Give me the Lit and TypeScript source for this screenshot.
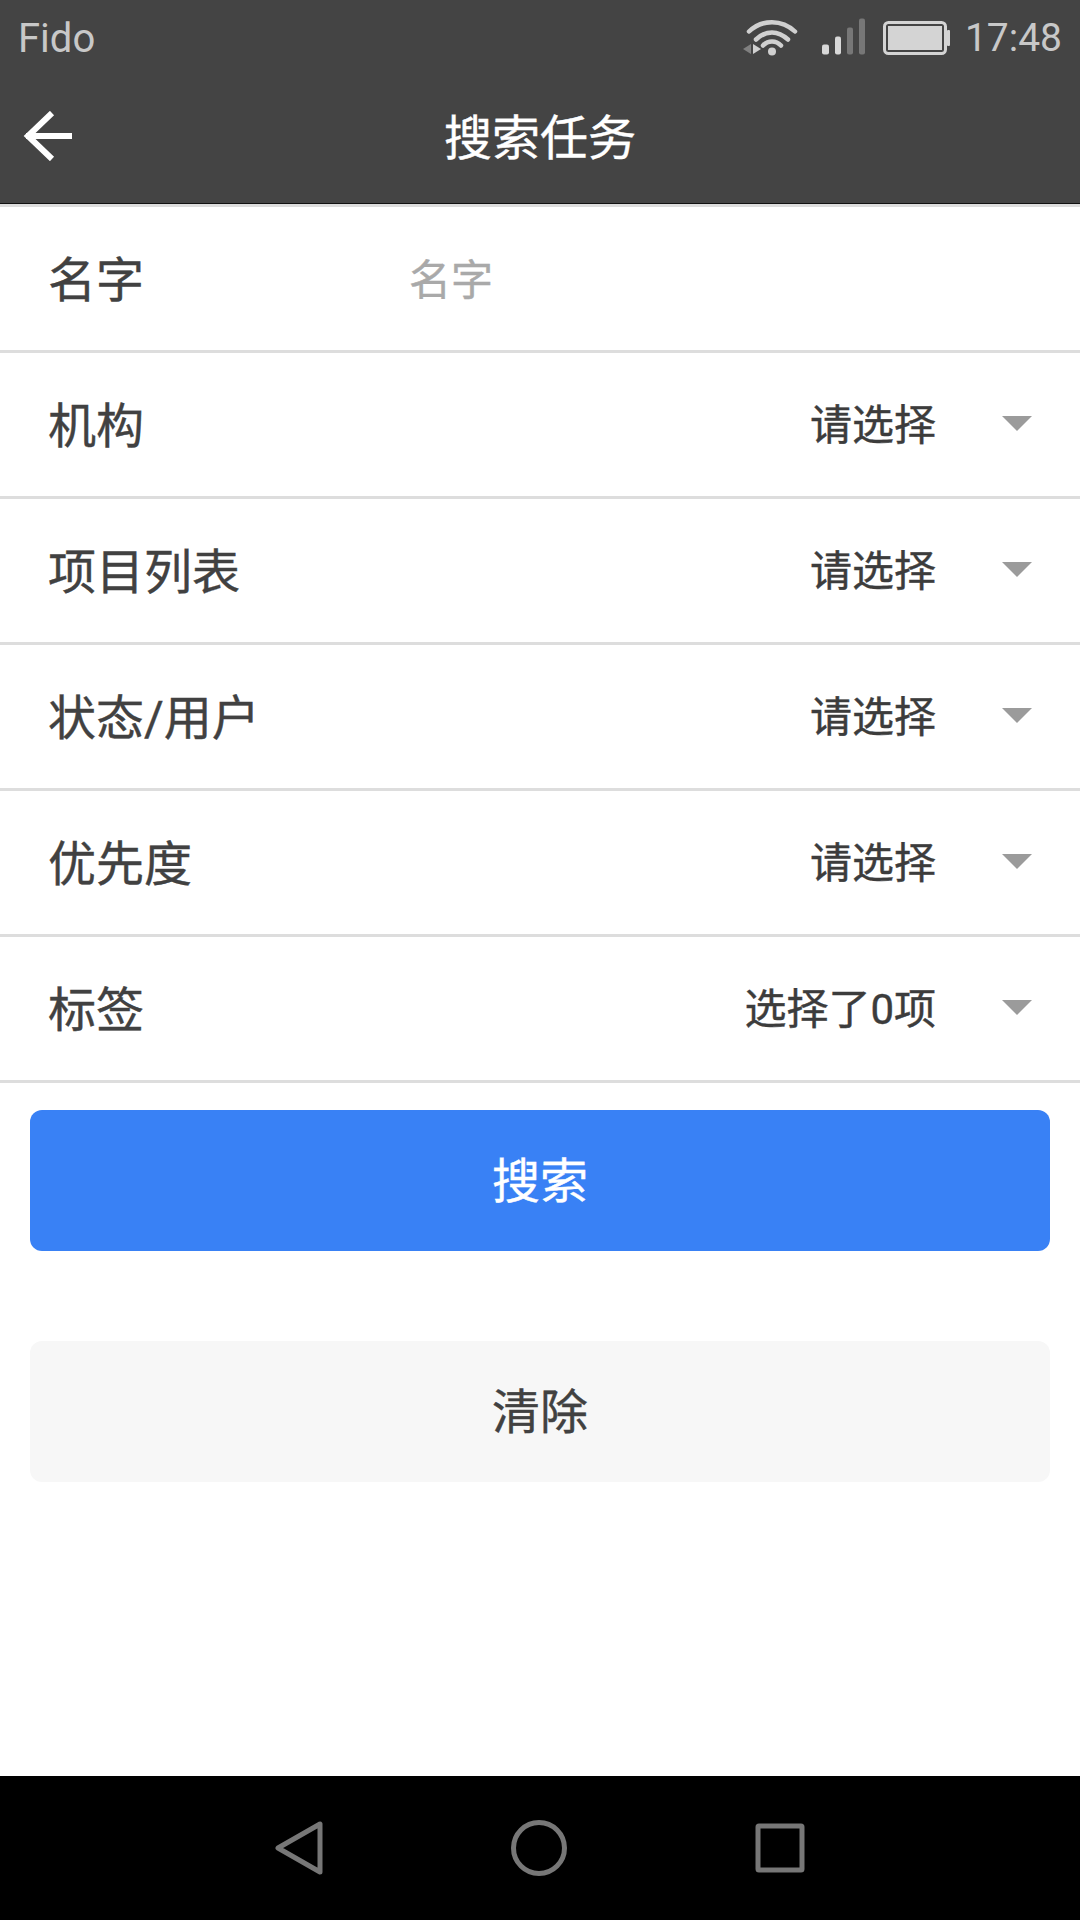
import { LitElement, html, css } from 'lit';
import { customElement } from 'lit/decorators.js';

const ROWS = [
    { label: '机构', value: '请选择' },
    { label: '项目列表', value: '请选择' },
    { label: '状态/用户', value: '请选择' },
    { label: '优先度', value: '请选择' },
    { label: '标签', value: '选择了0项' },
];

@customElement('app-root')
export class AppRoot extends LitElement {
    static styles = css`
        :host {
            display: flex;
            flex-direction: column;
            width: 1080px;
            height: 1920px;
            background: #fff;
            font-family: 'Roboto', 'Noto Sans CJK SC', sans-serif;
            color: #414141;
        }
        .status {
            height: 75px;
            background: #444;
            display: flex;
            align-items: center;
            color: #c8c8c8;
            font-size: 39px;
            padding: 0 18px;
            box-sizing: border-box;
        }
        .carrier {
            flex: 1;
            font-size: 40px;
            margin-top: 2px;
        }
        .time {
            margin-top: 1px;
        }
        .wifi {
            width: 56px;
            height: 40px;
            margin-right: 22px;
        }
        .signal {
            width: 44px;
            height: 40px;
            margin-right: 18px;
        }
        .battery {
            width: 68px;
            height: 34px;
            margin-right: 14px;
        }
        .toolbar {
            height: 129px;
            background: #444;
            border-bottom: 1px solid #111;
            box-sizing: border-box;
            padding-bottom: 10px;
            display: grid;
            grid-template-columns: 1fr auto 1fr;
            align-items: center;
            color: #fff;
            font-size: 48px;
            -webkit-text-stroke: 0.4px #fff;
        }
        .back {
            width: 50px;
            height: 50px;
            margin: 4px 0 0 23px;
            display: block;
        }
        .list {
            border-top: 3px solid #ddd;
        }
        .row {
            box-sizing: border-box;
            height: 146px;
            border-bottom: 3px solid #ddd;
            display: flex;
            align-items: center;
            padding: 0 48px 5px;
            font-size: 48px;
            -webkit-text-stroke: 0.4px #414141;
        }
        .name {
            width: 361px;
            flex: none;
        }
        .placeholder {
            font-size: 42px;
            color: #a9a9a9;
            -webkit-text-stroke: 0.4px #a9a9a9;
        }
        .value {
            margin-left: auto;
            margin-bottom: 2px;
            font-size: 42px;
            color: #3c3c3c;
            -webkit-text-stroke: 0.4px #3c3c3c;
        }
        .arrow {
            width: 30px;
            height: 15px;
            margin-left: 66px;
            margin-top: 3px;
        }
        .actions {
            display: flex;
            flex-direction: column;
            gap: 90px;
            padding: 27px 30px 0;
            flex: 1;
        }
        .btn {
            height: 141px;
            box-sizing: border-box;
            padding-bottom: 8px;
            border-radius: 12px;
            display: flex;
            align-items: center;
            justify-content: center;
            font-size: 48px;
        }
        .primary {
            background: #3981f5;
            color: #fff;
            -webkit-text-stroke: 0.4px #fff;
        }
        .secondary {
            background: #f7f7f7;
            color: #414141;
            -webkit-text-stroke: 0.4px #414141;
        }
        .nav {
            height: 144px;
            background: #000;
            display: flex;
            align-items: center;
            justify-content: center;
            gap: 188px;
        }
        .nav svg {
            display: block;
        }
    `;

    render() {
        return html`
            <div class="status">
                <span class="carrier">Fido</span>
                <svg class="wifi" viewBox="0 0 56 40" fill="none" stroke="#d0d0d0" stroke-width="4.5" stroke-linecap="round">
                    <path d="M6 13.5C19 1 39 1 52 13.5" />
                    <path d="M13 21.5C23 12 35 12 45 21.5" />
                    <path d="M20 27.5C25 22 33 22 38 27.5" />
                    <circle cx="29" cy="33.5" r="4" fill="#d0d0d0" stroke="none" />
                    <path d="M8 26L0 31L8 36Z" fill="#808080" stroke="none" />
                    <path d="M10 26L18 31L10 36Z" fill="#d0d0d0" stroke="none" />
                </svg>
                <svg class="signal" viewBox="0 0 44 40">
                    <rect x="1" y="26.5" width="7" height="10" rx="2" fill="#d8d8d8" />
                    <rect x="14" y="18.5" width="6" height="18" rx="2" fill="#d8d8d8" />
                    <rect x="26" y="9.5" width="6" height="27" rx="2" fill="#777" />
                    <rect x="38" y="0.5" width="6" height="36" rx="2" fill="#777" />
                </svg>
                <svg class="battery" viewBox="0 0 68 34">
                    <rect x="1.5" y="1.5" width="61" height="31" rx="4" fill="none" stroke="#d4d4d4" stroke-width="3" />
                    <rect x="5" y="5" width="54" height="24" fill="#d4d4d4" />
                    <rect x="64" y="9" width="3" height="16" rx="1" fill="#d4d4d4" />
                </svg>
                <span class="time">17:48</span>
            </div>
            <div class="toolbar">
                <svg class="back" viewBox="0 0 50 50" fill="none" stroke="#fff" stroke-width="6">
                    <path d="M3 25H49" />
                    <path d="M29 2L5 25L29 48" />
                </svg>
                <span>搜索任务</span>
            </div>
            <div class="list">
                <div class="row">
                    <span class="name">名字</span>
                    <span class="placeholder">名字</span>
                </div>
                ${ROWS.map(
                    (r) => html`
                        <div class="row">
                            <span>${r.label}</span>
                            <span class="value">${r.value}</span>
                            <svg class="arrow" viewBox="0 0 30 15"><path d="M0 0H30L15 15Z" fill="#9b9b9b" /></svg>
                        </div>
                    `
                )}
            </div>
            <div class="actions">
                <div class="btn primary">搜索</div>
                <div class="btn secondary">清除</div>
            </div>
            <div class="nav">
                <svg width="48" height="58" viewBox="0 0 48 58" fill="none" stroke="#777" stroke-width="5" stroke-linejoin="round">
                    <path d="M45 5V53L3 29Z" />
                </svg>
                <svg width="56" height="56" viewBox="0 0 56 56" fill="none" stroke="#777" stroke-width="5">
                    <circle cx="28" cy="28" r="25.5" />
                </svg>
                <svg width="50" height="50" viewBox="0 0 50 50" fill="none" stroke="#777" stroke-width="5" stroke-linejoin="round">
                    <rect x="3" y="3" width="44" height="44" rx="1" />
                </svg>
            </div>
        `;
    }
}
